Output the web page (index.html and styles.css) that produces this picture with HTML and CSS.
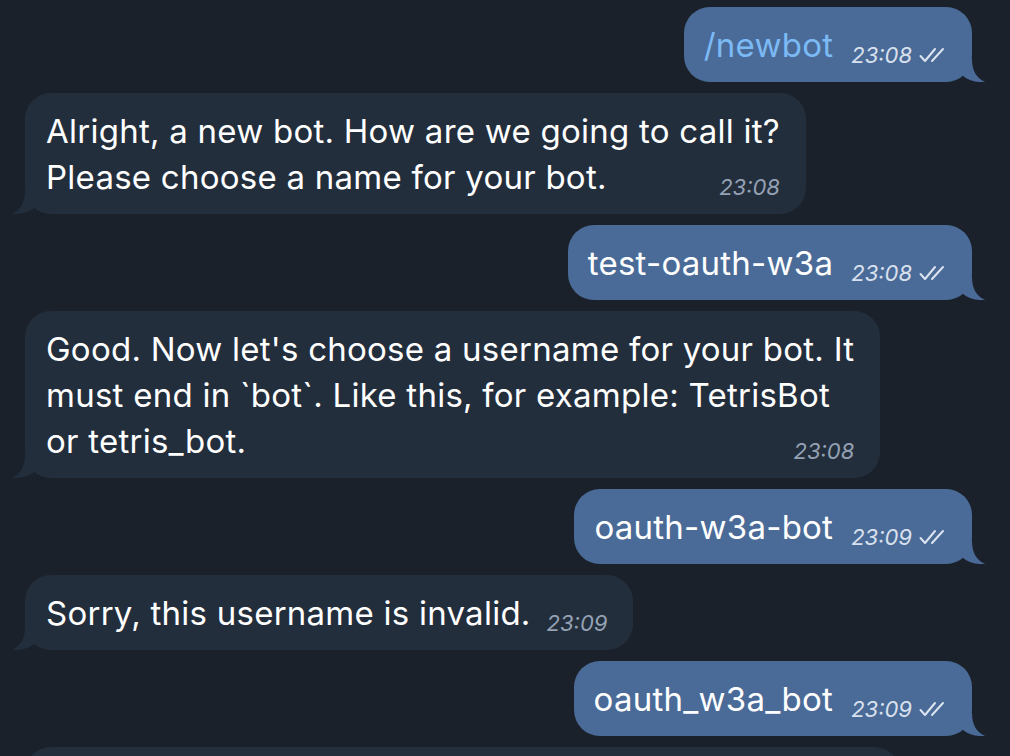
FILE: index.html
```html
<!DOCTYPE html>
<html lang="en">
<head>
<meta charset="utf-8">
<title>BotFather</title>
<link rel="stylesheet" href="styles.css">
</head>
<body>
<div class="chat">
  <div class="bubble out">
    <span class="cmd">/newbot</span><span class="meta">23:08<svg class="checks" viewBox="0 0 28 16" width="28" height="16"><path d="M1.5 9 L6 14 L16 2 M13 14 L24 2"/></svg></span>
    <svg class="tail" viewBox="0 0 26 26" width="26" height="26"><path d="M4 3 L13 3 C13 14 17 22 26 26 C18 26.5 10 25 4 20 Z"/></svg>
  </div>

  <div class="bubble in">
    Alright, a new bot. How are we going to call it?<br>Please choose a name for your bot.<span class="meta">23:08</span>
    <svg class="tail" viewBox="0 0 26 26" width="26" height="26"><path d="M4 3 L13 3 C13 14 17 22 26 26 C18 26.5 10 25 4 20 Z"/></svg>
  </div>

  <div class="bubble out">
    test-oauth-w3a<span class="meta">23:08<svg class="checks" viewBox="0 0 28 16" width="28" height="16"><path d="M1.5 9 L6 14 L16 2 M13 14 L24 2"/></svg></span>
    <svg class="tail" viewBox="0 0 26 26" width="26" height="26"><path d="M4 3 L13 3 C13 14 17 22 26 26 C18 26.5 10 25 4 20 Z"/></svg>
  </div>

  <div class="bubble in">
    Good. Now let's choose a username for your bot. It<br>must end in `bot`. Like this, for example: TetrisBot<br>or tetris_bot.<span class="meta">23:08</span>
    <svg class="tail" viewBox="0 0 26 26" width="26" height="26"><path d="M4 3 L13 3 C13 14 17 22 26 26 C18 26.5 10 25 4 20 Z"/></svg>
  </div>

  <div class="bubble out">
    oauth-w3a-bot<span class="meta">23:09<svg class="checks" viewBox="0 0 28 16" width="28" height="16"><path d="M1.5 9 L6 14 L16 2 M13 14 L24 2"/></svg></span>
    <svg class="tail" viewBox="0 0 26 26" width="26" height="26"><path d="M4 3 L13 3 C13 14 17 22 26 26 C18 26.5 10 25 4 20 Z"/></svg>
  </div>

  <div class="bubble in">
    Sorry, this username is invalid.<span class="meta">23:09</span>
    <svg class="tail" viewBox="0 0 26 26" width="26" height="26"><path d="M4 3 L13 3 C13 14 17 22 26 26 C18 26.5 10 25 4 20 Z"/></svg>
  </div>

  <div class="bubble out">
    oauth_w3a_bot<span class="meta">23:09<svg class="checks" viewBox="0 0 28 16" width="28" height="16"><path d="M1.5 9 L6 14 L16 2 M13 14 L24 2"/></svg></span>
    <svg class="tail" viewBox="0 0 26 26" width="26" height="26"><path d="M4 3 L13 3 C13 14 17 22 26 26 C18 26.5 10 25 4 20 Z"/></svg>
  </div>

  <div class="bubble in stub"></div>
</div>
</body>
</html>
```

FILE: styles.css
```css
html, body {
  margin: 0;
  padding: 0;
  height: 100%;
  overflow: hidden;
  background: #1b212a;
}

.chat {
  display: flex;
  flex-direction: column;
  gap: 11px;
  padding: 7px 38px 0 25px;
  font-family: "Inter", "Roboto", "Liberation Sans", sans-serif;
  font-size: 33px;
  line-height: 46px;
  letter-spacing: 0.25px;
  color: #ffffff;
}

.bubble {
  position: relative;
  width: max-content;
  padding: 15px 26px 14px 21px;
  border-radius: 26px;
}

.bubble.out {
  align-self: flex-end;
  background: #4a6b98;
  padding-left: 20px;
  padding-right: 25px;
}

.bubble.in {
  align-self: flex-start;
  background: #232e3d;
}

.bubble.stub {
  width: 875px;
  height: 60px;
  padding: 0;
}

.cmd {
  color: #7cbaf5;
}

.meta {
  float: right;
  display: flex;
  align-items: center;
  gap: 7px;
  margin: 21px 0 0 16px;
  font-size: 22px;
  line-height: 24px;
  letter-spacing: 0;
  font-style: italic;
  color: #94a1b3;
}

.out .meta {
  margin-left: 18px;
  color: rgba(236, 242, 250, 0.9);
}

.checks {
  fill: none;
  stroke: rgba(236, 242, 250, 0.9);
  stroke-width: 2;
  stroke-linecap: round;
  stroke-linejoin: round;
}

.tail {
  position: absolute;
  bottom: 0;
}

.out .tail {
  right: -13px;
  fill: #4a6b98;
}

.in .tail {
  left: -13px;
  transform: scaleX(-1);
  fill: #232e3d;
}
```
